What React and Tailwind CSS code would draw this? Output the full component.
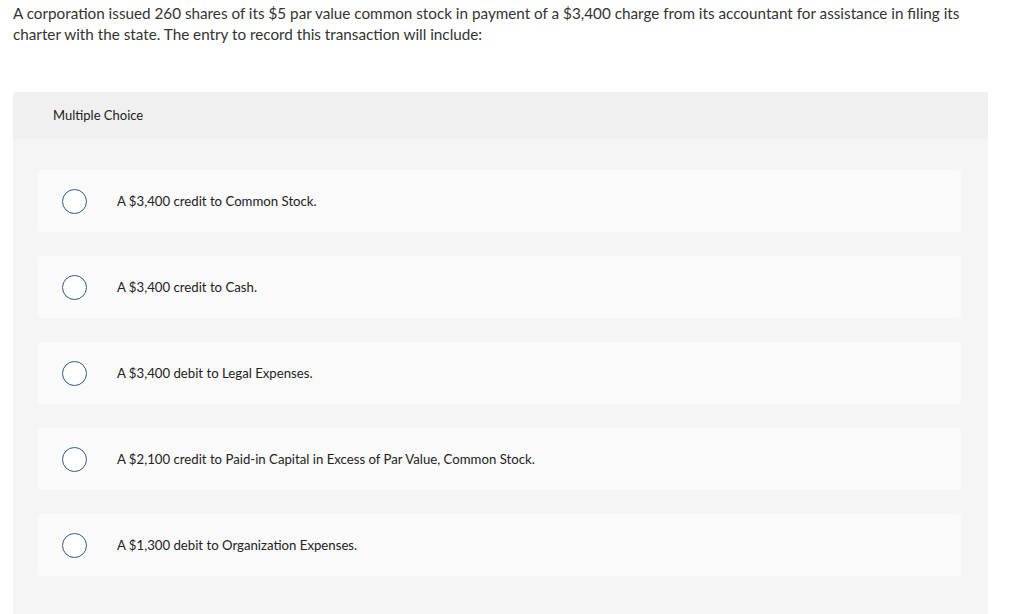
const options = [
  "A $3,400 credit to Common Stock.",
  "A $3,400 credit to Cash.",
  "A $3,400 debit to Legal Expenses.",
  "A $2,100 credit to Paid-in Capital in Excess of Par Value, Common Stock.",
  "A $1,300 debit to Organization Expenses.",
];

export default function App() {
  return (
    <div className="min-h-screen bg-white font-['Lato','Liberation_Sans',sans-serif] text-[#333]">
      <p className="pl-[13px] pt-[3px] text-[15.25px] leading-[21px] w-[1000px]">
        A corporation issued 260 shares of its $5 par value common stock in payment of a $3,400 charge from its accountant for assistance in filing its charter with the state. The entry to record this transaction will include:
      </p>
      <div className="ml-[13px] mt-[47px] w-[975px] rounded-t-[3px] overflow-hidden">
        <div className="h-[47px] bg-[#f0f0f0] flex items-center pl-[40px] text-[13px] text-[#222]">
          Multiple Choice
        </div>
        <div className="bg-[#f5f5f5] pt-[31px] pb-[40px] pl-[25px] pr-[27px] flex flex-col gap-[24px]">
          {options.map((o) => (
            <div key={o} className="h-[62px] bg-[#fafafa] rounded-[2px] flex items-center">
              <span className="ml-[24px] w-[25px] h-[25px] rounded-full border-[1.5px] border-[#2c5a8f] bg-white shrink-0" />
              <span className="ml-[30px] pt-[2px] text-[13.2px] text-[#222]">{o}</span>
            </div>
          ))}
        </div>
      </div>
    </div>
  );
}
